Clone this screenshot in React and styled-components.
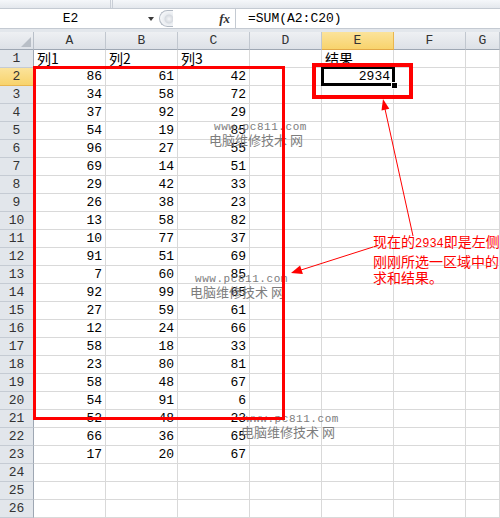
import styled, { createGlobalStyle } from "styled-components"

// Styles globaux
const GlobalStyle = createGlobalStyle`
    html, body {
        margin: 0;
        padding: 0;
        background: #ffffff;
        overflow: hidden;
    }
    body {
        font-family: "Liberation Mono", "Noto Sans CJK SC", monospace;
        color: #000000;
    }
`

const MONO = `"Liberation Mono", "Noto Sans CJK SC", monospace`
const CJK = `"Noto Sans CJK SC", "Liberation Mono", sans-serif`

const COLUMNS = ["A", "B", "C", "D", "E", "F", "G"]

// Données de la feuille (lignes 1 à 26)
const DATA = [
    ["列1", "列2", "列3", "", "结果"],
    [86, 61, 42, "", 2934],
    [34, 58, 72],
    [37, 92, 29],
    [54, 19, 85],
    [96, 27, 55],
    [69, 14, 51],
    [29, 42, 33],
    [26, 38, 23],
    [13, 58, 82],
    [10, 77, 37],
    [91, 51, 69],
    [7, 60, 85],
    [92, 99, 65],
    [27, 59, 61],
    [12, 24, 66],
    [58, 18, 33],
    [23, 80, 81],
    [58, 48, 67],
    [54, 91, 6],
    [52, 48, 23],
    [66, 36, 65],
    [17, 20, 67],
    [],
    [],
    [],
]

const WATERMARKS = [
    { left: 209, top: 121 },
    { left: 190, top: 273 },
    { left: 241, top: 413 },
]

// CSS des différents éléments
const Page = styled.div`
    position: relative;
    width: 500px;
    height: 518px;
    overflow: hidden;
    display: flex;
    flex-direction: column;
`
const TabStrip = styled.div`
    height: 10px;
    box-sizing: border-box;
    display: flex;
    background: linear-gradient(#f5f7fa, #e4e8ed);
    border-bottom: 1px solid #c4cad2;
`
const StripSegment = styled.div`
    width: ${(props) => props.$width}px;
    border-right: 1px solid #c9ced6;
    box-sizing: border-box;
`
const FormulaBar = styled.div`
    height: 21px;
    box-sizing: border-box;
    display: flex;
    align-items: stretch;
    background: #ffffff;
    border-bottom: 1px solid #c4cad2;
`
const NameBox = styled.div`
    width: 141px;
    display: flex;
    align-items: center;
    justify-content: center;
    font-size: 13px;
`
const DropZone = styled.div`
    width: 18px;
    display: flex;
    align-items: center;
    justify-content: center;
`
const DropArrow = styled.div`
    width: 0;
    height: 0;
    border-left: 3.5px solid transparent;
    border-right: 3.5px solid transparent;
    border-top: 4px solid #3a3a3a;
    margin-left: 2px;
`
const Grabber = styled.div`
    width: 14px;
    margin: 1px 0;
    box-sizing: border-box;
    border: 1px solid #b3bac4;
    border-right: none;
    border-radius: 9px 0 0 9px;
    background: radial-gradient(circle at 9px 8px, #f4f5f7 0, #d5d9df 4px, #e9ecf0 5px, #f7f8fa 9px);
`
const FxZone = styled.div`
    flex: 0 0 63px;
    display: flex;
    align-items: center;
    justify-content: flex-end;
    padding-right: 5px;
    box-sizing: border-box;
    border-right: 1px solid #c4cad2;
    font-family: "Liberation Serif", serif;
    font-style: italic;
    font-weight: bold;
    font-size: 13px;
    color: #333333;
`
const FormulaText = styled.div`
    flex: 1;
    display: flex;
    align-items: center;
    padding-left: 12px;
    font-size: 13px;
`
const Gap = styled.div`
    height: 3px;
    background: #e3e7ec;
`
const Sheet = styled.div`
    display: grid;
    grid-template-columns: 34px repeat(6, 72px) 34px;
    grid-auto-rows: 18px;
    font-family: ${MONO};
    font-size: 13px;
`
const Corner = styled.div`
    position: relative;
    box-sizing: border-box;
    background: linear-gradient(#eef0f3, #dde1e7);
    border-right: 1px solid #b9c0c9;
    border-bottom: 1px solid #9ea7b3;
    &::after {
        content: "";
        position: absolute;
        right: 2px;
        bottom: 2px;
        border-left: 10px solid transparent;
        border-bottom: 10px solid #b8bec6;
    }
`
const ColHead = styled.div`
    box-sizing: border-box;
    display: flex;
    align-items: center;
    justify-content: center;
    color: #333333;
    background: ${(props) =>
        props.$active
            ? "linear-gradient(#fbe39b, #f8d36c)"
            : "linear-gradient(#eef0f3, #dde1e7)"};
    border-right: 1px solid ${(props) => (props.$active ? "#e9b64f" : "#c1c7cf")};
    border-bottom: 1px solid ${(props) => (props.$active ? "#e2a847" : "#9ea7b3")};
`
const RowHead = styled.div`
    box-sizing: border-box;
    display: flex;
    align-items: center;
    justify-content: center;
    color: #333333;
    background: ${(props) =>
        props.$active ? "linear-gradient(#fbe39b, #f8d36c)" : "#e2e6eb"};
    border-right: 1px solid ${(props) => (props.$active ? "#e2a847" : "#9ea7b3")};
    border-bottom: 1px solid ${(props) => (props.$active ? "#e9b64f" : "#c5cbd3")};
`
const Cell = styled.div`
    position: relative;
    box-sizing: border-box;
    display: flex;
    align-items: center;
    justify-content: ${(props) => (props.$numeric ? "flex-end" : "flex-start")};
    padding: 0 3px;
    white-space: nowrap;
    border-right: 1px solid #d9d9d9;
    border-bottom: 1px solid #d9d9d9;
    ${(props) =>
        props.$selected &&
        `
        &::after {
            content: "";
            position: absolute;
            left: -1px;
            top: -2px;
            right: -2px;
            bottom: -1px;
            border: 3px solid #000000;
            z-index: 1;
        }
        &::before {
            content: "";
            position: absolute;
            right: -5px;
            bottom: -4px;
            width: 5px;
            height: 5px;
            background: #000000;
            border: 1px solid #ffffff;
            z-index: 2;
        }
    `}
`
const CellText = styled.span`
    font-family: ${(props) => (props.$cjk ? CJK : MONO)};
    font-size: ${(props) => (props.$cjk ? "14px" : "13px")};
    line-height: 17px;
`
const Watermark = styled.div`
    position: absolute;
    left: ${(props) => props.$left}px;
    top: ${(props) => props.$top}px;
    color: #7d7d7d;
    z-index: 3;
    pointer-events: none;
`
const WatermarkUrl = styled.div`
    margin-left: 5px;
    font-family: ${MONO};
    font-size: 11px;
    letter-spacing: 0.55px;
    line-height: 12px;
`
const WatermarkName = styled.div`
    font-family: ${CJK};
    font-size: 13px;
    line-height: 14px;
    white-space: pre;
`
const Annotation = styled.div`
    position: absolute;
    left: 373px;
    top: 233px;
    color: #ff0000;
    font-family: ${CJK};
    font-size: 14px;
    line-height: 16.5px;
    white-space: nowrap;
    z-index: 4;
`
const AnnotationDigits = styled.span`
    font-family: ${MONO};
    font-size: 12px;
`
const Markup = styled.svg`
    position: absolute;
    left: 0;
    top: 0;
    z-index: 5;
    pointer-events: none;
`

function SheetCell({ value, selected }) {
    const numeric = typeof value === "number"
    const cjk = typeof value === "string" && /[\u4e00-\u9fff]/.test(value)
    return (
        <Cell $numeric={numeric} $selected={selected}>
            {value !== undefined && value !== "" && (
                <CellText $cjk={cjk}>{value}</CellText>
            )}
        </Cell>
    )
}

function App() {
    return (
        <Page>
            <GlobalStyle />
            <TabStrip>
                <StripSegment $width={111} />
                <StripSegment $width={2} />
            </TabStrip>
            <FormulaBar>
                <NameBox>E2</NameBox>
                <DropZone>
                    <DropArrow />
                </DropZone>
                <Grabber />
                <FxZone>fx</FxZone>
                <FormulaText>=SUM(A2:C20)</FormulaText>
            </FormulaBar>
            <Gap />
            <Sheet>
                <Corner />
                {COLUMNS.map((col) => (
                    <ColHead key={col} $active={col === "E"}>
                        {col}
                    </ColHead>
                ))}
                {DATA.map((row, r) => (
                    <RowLine key={r} index={r} row={row} />
                ))}
            </Sheet>

            {WATERMARKS.map((mark, i) => (
                <Watermark key={i} $left={mark.left} $top={mark.top}>
                    <WatermarkUrl>www.pc811.com</WatermarkUrl>
                    <WatermarkName>电脑维修技术 网</WatermarkName>
                </Watermark>
            ))}

            <Annotation>
                <div>
                    现在的<AnnotationDigits>2934</AnnotationDigits>即是左侧
                </div>
                <div>刚刚所选一区域中的</div>
                <div>求和结果。</div>
            </Annotation>

            <Markup width="500" height="518" viewBox="0 0 500 518">
                <rect x="34.5" y="67.5" width="249" height="351" fill="none" stroke="#ff0000" strokeWidth="3" />
                <rect x="314" y="65" width="97" height="32" fill="none" stroke="#ff0000" strokeWidth="4" />
                <line x1="413" y1="236" x2="385" y2="109" stroke="#ff0000" strokeWidth="1" />
                <polygon points="383,99 389.3,108.8 381.5,110.6" fill="#ff0000" />
                <line x1="373" y1="247" x2="301" y2="270" stroke="#ff0000" strokeWidth="1" />
                <polygon points="291,273 302.9,274 300.1,265.4" fill="#ff0000" />
            </Markup>
        </Page>
    )
}

// Une ligne de la feuille : en-tête puis cellules
function RowLine({ index, row }) {
    const rowNumber = index + 1
    return (
        <>
            <RowHead $active={rowNumber === 2}>{rowNumber}</RowHead>
            {COLUMNS.map((col, c) => (
                <SheetCell
                    key={col}
                    value={row[c]}
                    selected={rowNumber === 2 && col === "E"}
                />
            ))}
        </>
    )
}

export default App
